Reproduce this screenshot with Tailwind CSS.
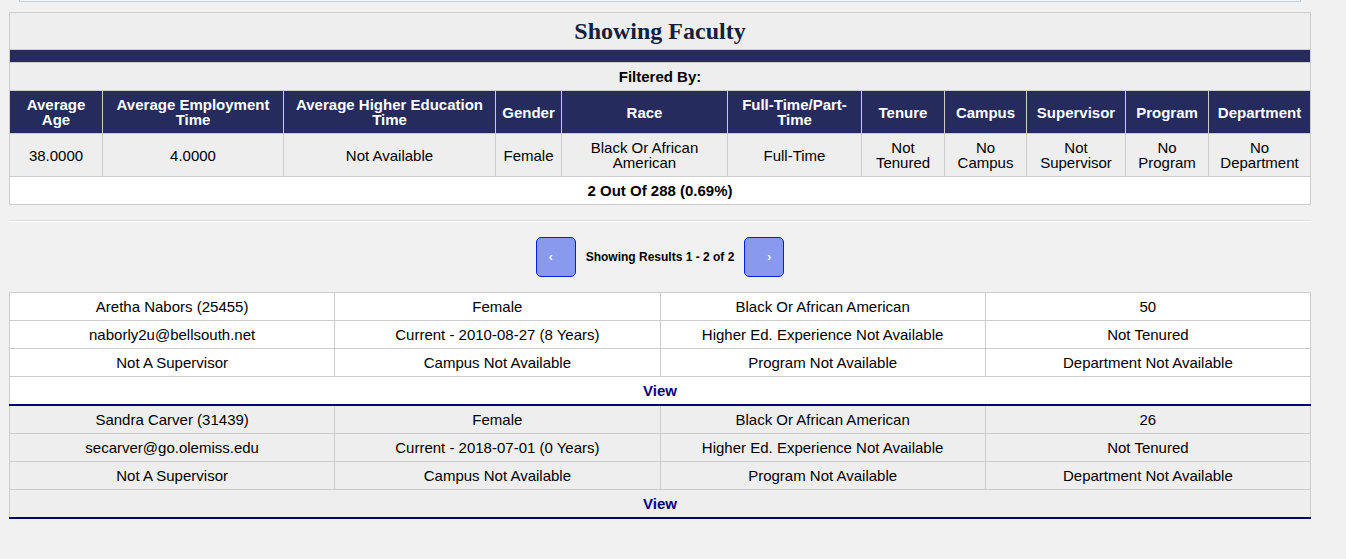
<!DOCTYPE html>
<html lang="en">
<head>
<meta charset="utf-8">
<title>Showing Faculty</title>
<script src="https://cdn.jsdelivr.net/npm/@tailwindcss/browser@4"></script>
</head>
<body class="min-h-screen bg-[#f1f1f1] font-['Liberation_Sans',Arial,sans-serif] text-[15px] leading-[15px] text-black">
<main class="pr-[35px] pl-[9px]">
  <div class="mx-[10px] h-[2px] border-x border-b border-[#ccc] bg-[#f0f8ff]"></div>

  <table class="mt-[10px] w-full table-fixed border-collapse bg-[#eee] text-center [&_td]:border [&_td]:border-[#ccc] [&_td]:px-[5px] [&_td]:py-[6px] [&_th]:border [&_th]:border-[#ccc] [&_th]:px-[5px] [&_th]:py-[6px]">
    <colgroup>
      <col class="w-[93px]"><col class="w-[181px]"><col class="w-[212px]"><col class="w-[66px]"><col class="w-[166px]"><col class="w-[134px]"><col class="w-[83px]"><col class="w-[82px]"><col class="w-[99px]"><col class="w-[83px]"><col class="w-[102px]">
    </colgroup>
    <thead>
      <tr><th colspan="11"><h1 class="font-['Liberation_Serif',serif] text-[24px] leading-[24px] font-bold text-[#14213d]">Showing Faculty</h1></th></tr>
      <tr class="bg-[#252b5c]"><td colspan="11"></td></tr>
      <tr><th colspan="11">Filtered By:</th></tr>
      <tr class="bg-[#252b5c] text-white">
        <th scope="col">Average Age</th>
        <th scope="col">Average Employment Time</th>
        <th scope="col">Average Higher Education Time</th>
        <th scope="col">Gender</th>
        <th scope="col">Race</th>
        <th scope="col">Full-Time/Part-Time</th>
        <th scope="col">Tenure</th>
        <th scope="col">Campus</th>
        <th scope="col">Supervisor</th>
        <th scope="col">Program</th>
        <th scope="col">Department</th>
      </tr>
    </thead>
    <tbody>
      <tr>
        <td>38.0000</td>
        <td>4.0000</td>
        <td>Not Available</td>
        <td>Female</td>
        <td>Black Or African American</td>
        <td>Full-Time</td>
        <td>Not Tenured</td>
        <td>No Campus</td>
        <td>Not Supervisor</td>
        <td>No Program</td>
        <td>No Department</td>
      </tr>
      <tr class="bg-white font-bold"><td colspan="11">2 Out Of 288 (0.69%)</td></tr>
    </tbody>
  </table>

  <hr class="my-[15px] h-[2px] border-t border-b border-t-[#ddd] border-b-white">

  <nav aria-label="Results pages" class="flex items-center justify-center gap-[10px] text-[12px] font-bold">
    <button type="button" aria-label="Previous page" class="size-10 rounded-[5px] border border-[#001fe0] bg-[#8899ee] pr-[10px] text-white">‹</button>
    <span>Showing Results 1 - 2 of 2</span>
    <button type="button" aria-label="Next page" class="size-10 rounded-[5px] border border-[#001fe0] bg-[#8899ee] pl-[10px] text-white">›</button>
  </nav>

  <table class="mt-[15px] w-full table-fixed border-collapse text-center [&_td]:border [&_td]:border-[#ccc] [&_td]:px-[5px] [&_td]:py-[6px]">
    <tbody class="border-b-2 border-[#000080] bg-white">
      <tr><td>Aretha Nabors (25455)</td><td>Female</td><td>Black Or African American</td><td>50</td></tr>
      <tr><td>naborly2u@bellsouth.net</td><td>Current - 2010-08-27 (8 Years)</td><td>Higher Ed. Experience Not Available</td><td>Not Tenured</td></tr>
      <tr><td>Not A Supervisor</td><td>Campus Not Available</td><td>Program Not Available</td><td>Department Not Available</td></tr>
      <tr><td colspan="4"><a href="#25455" class="font-bold text-[#000080]">View</a></td></tr>
    </tbody>
    <tbody class="border-b-2 border-[#000080] bg-[#eee]">
      <tr><td>Sandra Carver (31439)</td><td>Female</td><td>Black Or African American</td><td>26</td></tr>
      <tr><td>secarver@go.olemiss.edu</td><td>Current - 2018-07-01 (0 Years)</td><td>Higher Ed. Experience Not Available</td><td>Not Tenured</td></tr>
      <tr><td>Not A Supervisor</td><td>Campus Not Available</td><td>Program Not Available</td><td>Department Not Available</td></tr>
      <tr><td colspan="4"><a href="#31439" class="font-bold text-[#000080]">View</a></td></tr>
    </tbody>
  </table>
</main>
</body>
</html>
